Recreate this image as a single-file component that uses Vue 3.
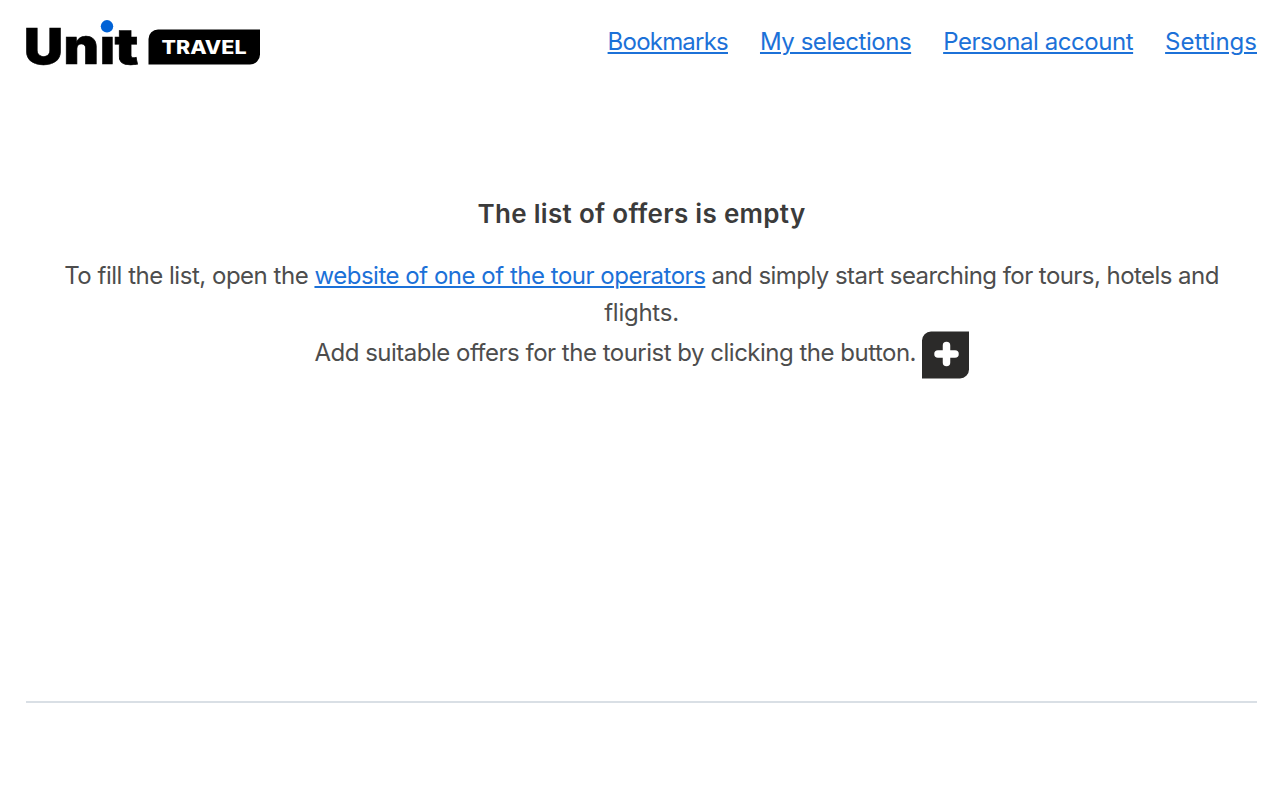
<script setup>
const links = [
    { id: 'bookmarks', title: 'Bookmarks' },
    { id: 'selections', title: 'My selections' },
    { id: 'account', title: 'Personal account' },
    { id: 'settings', title: 'Settings' }
];
</script>

<template>
    <div class="page">
        <header class="header">
            <svg class="logo" width="236" height="48" viewBox="0 0 236 48">
                <text class="logo-name wide" x="-2" y="45.500" textLength="39" lengthAdjust="spacingAndGlyphs">U</text>
                <text class="logo-name wide" x="37.500" y="45.500" textLength="35.500" lengthAdjust="spacingAndGlyphs">n</text>
                <text class="logo-name" x="74" y="45.500">i</text>
                <rect x="73" y="0" width="16" height="17.5" fill="#fff" />
                <text class="logo-name" x="88.500" y="45.500" textLength="24" lengthAdjust="spacingAndGlyphs">t</text>
                <circle cx="81" cy="8.3" r="6.2" fill="#0062d6" />
                <path d="M132 11.5H234V36.500a10 10 0 0 1-10 10H122.500V21a9.500 9.500 0 0 1 9.500-9.500z" fill="#000" />
                <text class="logo-tag" x="135.500" y="36" textLength="85" lengthAdjust="spacingAndGlyphs">TRAVEL</text>
            </svg>
            <nav class="nav">
                <a v-for="link in links" :key="link.id" href="#" class="link" :class="link.id">{{ link.title }}</a>
            </nav>
        </header>

        <main class="empty">
            <h1 class="title">The list of offers is empty</h1>
            <p class="text">
                <span class="lead">To fill the list, open the </span><a href="#" class="link operators">website of one of the tour operators</a><span class="tail"> and simply start searching for tours, hotels and</span><br />
                <span class="last">flights.</span>
            </p>
            <p class="hint">
                <span class="hint-text">Add suitable offers for the tourist by clicking the button.</span>
                <svg width="47" height="48" viewBox="0 0 47 48">
                    <path d="M9 0.500H47V38.500a9 9 0 0 1-9 9H0V9.500a9 9 0 0 1 9-9z" fill="#2b2a29" />
                    <path d="M24.500 14.500v17M16 23h17" stroke="#fff" stroke-width="7.500" stroke-linecap="round" />
                </svg>
            </p>
        </main>
    </div>
</template>

<style>
body {
    margin: 0;
    background: #fff;
}
</style>

<style scoped>
.page {
    box-sizing: border-box;
    width: 1280px;
    height: 800px;
    padding: 18px 23px 0 26px;
    font-family: Inter, sans-serif;
    font-size: 24px;
    color: #4d4d4d;
    overflow: hidden;
}

.header {
    display: flex;
    justify-content: space-between;
    height: 48px;
}

.logo {
    overflow: visible;
}

.logo-name {
    font-size: 50px;
    font-weight: 900;
    stroke: #000;
    stroke-width: 0.6px;
}

.logo-tag {
    font-size: 18.5px;
    font-weight: 800;
    fill: #fff;
}

.nav {
    display: flex;
    gap: 32px;
    padding-top: 6px;
    line-height: 36px;
}

.link {
    color: #1c71d8;
    text-decoration: underline;
    text-decoration-thickness: 2px;
    text-underline-offset: 2px;
}

.bookmarks {
    letter-spacing: -0.78px;
}

.selections {
    letter-spacing: -0.46px;
}

.account {
    letter-spacing: -0.44px;
}

.empty {
    box-sizing: border-box;
    height: 637px;
    padding: 128px 30px 0;
    border-bottom: 2px solid #d9dfe5;
    text-align: center;
}

.title {
    margin: 0;
    font-size: 26px;
    font-weight: 600;
    line-height: 40px;
    letter-spacing: 0.31px;
    color: #3b3b3b;
}

.text {
    margin: 23px 0 0;
    line-height: 37px;
    white-space: nowrap;
}

.lead {
    letter-spacing: -0.48px;
}

.operators {
    letter-spacing: -0.48px;
}

.tail {
    letter-spacing: -0.55px;
}

.last {
    letter-spacing: -0.25px;
}

.hint {
    display: flex;
    justify-content: center;
    gap: 5.5px;
    margin: 0;
    line-height: 44px;
}

.hint-text {
    letter-spacing: -0.5px;
}
</style>
